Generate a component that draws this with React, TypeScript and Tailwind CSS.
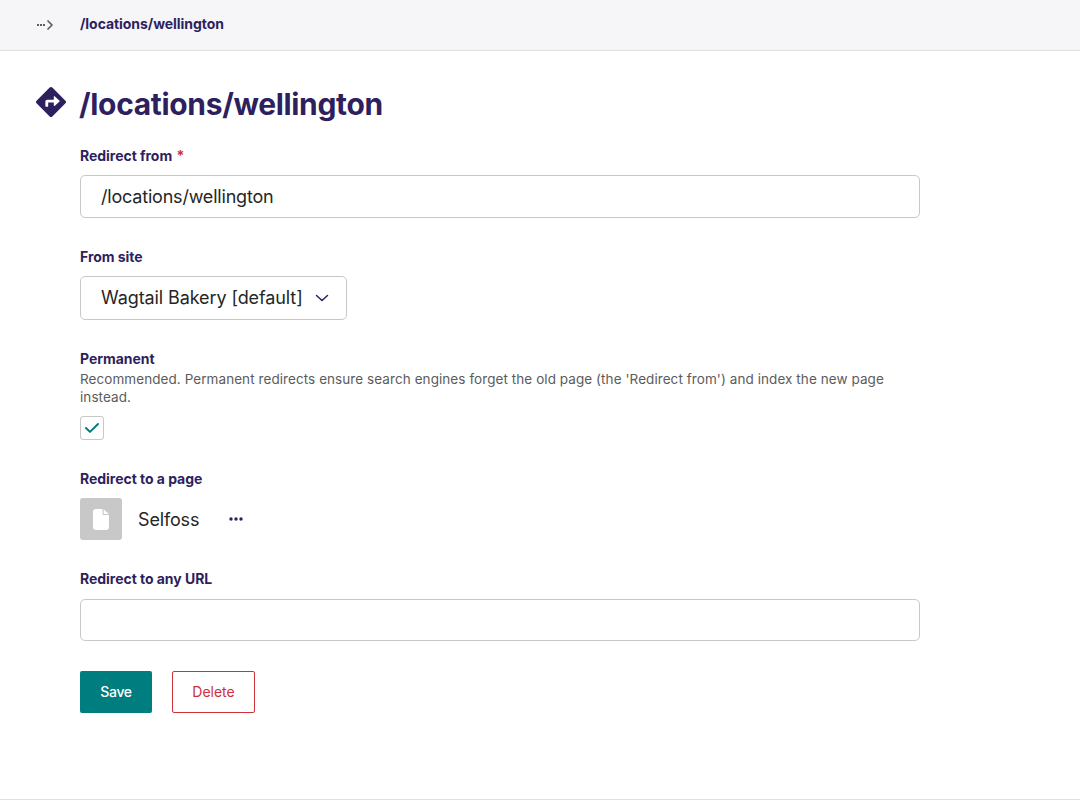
import type { ReactNode } from 'react';
import { FaDirections } from 'react-icons/fa';

function Label({ children, className = '' }: { children: ReactNode; className?: string }) {
  return <div className={`text-[14px] leading-[18px] font-bold tracking-[-0.04px] text-[#2e1f5e] ${className}`}>{children}</div>;
}

export default function App() {
  return (
    <div className="flex h-[800px] w-[1080px] flex-col overflow-hidden border-b border-[#dfdfdf] bg-white font-['Inter','Liberation_Sans',sans-serif] text-[#262626]">
      <header className="flex h-[51px] shrink-0 items-center border-b border-[#e0e0e0] bg-[#f6f6f8] pl-9">
        <svg className="mr-[26px] h-[12px] w-[18px]" viewBox="0 0 18 12" fill="none">
          <path d="M1 5h2v2H1zM4 5h2v2H4zM7 5h2v2H7z" fill="#5c5c5c" />
          <path d="M12 2l4 4-4 4" stroke="#5c5c5c" strokeWidth="1.7" strokeLinecap="round" strokeLinejoin="round" />
        </svg>
        <span className="-mt-[2px] text-[14px] leading-[18px] font-bold tracking-[-0.06px] text-[#2e1f5e]">/locations/wellington</span>
      </header>
      <main className="flex flex-col pl-9">
        <div className="mt-[34px] flex h-[36px] items-center">
          <FaDirections className="mr-[13px] -mt-[2px] h-[30px] w-[30px] text-[#2e1f5e]" />
          <h1 className="mt-px text-[30px] leading-[36px] font-bold tracking-[-0.34px] text-[#2e1f5e]">/locations/wellington</h1>
        </div>
        <form className="ml-11 flex w-[840px] flex-col" onSubmit={(e) => e.preventDefault()}>
          <Label className="mt-[26px]">
            Redirect from <span className="ml-px text-[#cd3238]">*</span>
          </Label>
          <input className="mt-[10px] h-[43px] rounded-[5px] border border-[#c8c8c8] px-5 text-[18px] tracking-[-0.2px] outline-none" defaultValue="/locations/wellington" />
          <Label className="mt-[30px]">From site</Label>
          <div className="mt-[10px] flex h-[44px] w-[267px] items-center rounded-[5px] border border-[#c8c8c8] pl-5">
            <span className="-mt-px w-[201px] text-[18px] tracking-[-0.1px] whitespace-nowrap">Wagtail Bakery [default]</span>
            <svg className="ml-[13px] h-[8px] w-[14px]" viewBox="0 0 14 8" fill="none">
              <path d="M1.500 1.500L7 6.500l5.500-5" stroke="#2e1f5e" strokeWidth="1.5" strokeLinecap="round" strokeLinejoin="round" />
            </svg>
          </div>
          <Label className="mt-[30px]">Permanent</Label>
          <p className="mt-[2px] text-[13.5px] leading-[18px] tracking-[0.07px] text-[#5c5c5c]">
            Recommended. Permanent redirects ensure search engines forget the old page (the 'Redirect from') and index the new page
            <br />
            instead.
          </p>
          <div className="mt-[10px] flex h-[24px] w-[24px] items-center justify-center rounded-[3px] border border-[#c8c8c8]">
            <svg className="h-[12px] w-[16px]" viewBox="0 0 16 12" fill="none">
              <path d="M2 6l4 3.900L14 2" stroke="#007d7e" strokeWidth="2" strokeLinecap="round" strokeLinejoin="round" />
            </svg>
          </div>
          <Label className="mt-[30px]">Redirect to a page</Label>
          <div className="mt-[10px] flex h-[42px] items-center">
            <div className="flex h-[42px] w-[42px] items-center justify-center rounded-[3px] bg-[#c8c8c8]">
              <svg className="h-[21px] w-[16px]" viewBox="0 0 16 21" fill="#fff">
                <path d="M3 0H9.500V4.800a1.200 1.200 0 0 0 1.200 1.200H16V18a3 3 0 0 1-3 3H3a3 3 0 0 1-3-3V3a3 3 0 0 1 3-3Z" />
                <path d="M10.700 0.200L15.800 5.100H10.700Z" />
              </svg>
            </div>
            <span className="ml-4 w-[91px] text-[18px] tracking-[-0.15px]">Selfoss</span>
            <svg className="h-[4px] w-[14px]" viewBox="0 0 14 4" fill="#2e1f5e">
              <circle cx="2" cy="2" r="1.700" />
              <circle cx="7" cy="2" r="1.700" />
              <circle cx="12" cy="2" r="1.700" />
            </svg>
          </div>
          <Label className="mt-[30px]">Redirect to any URL</Label>
          <input className="mt-[11px] h-[42px] rounded-[5px] border border-[#c8c8c8] px-5 text-[18px] outline-none" />
          <div className="mt-[30px] flex gap-5">
            <button className="h-[42px] w-[72px] rounded-[2px] bg-[#007d7e] pb-[2px] text-[14px] font-medium tracking-[-0.3px] text-white">Save</button>
            <button className="h-[42px] w-[83px] rounded-[2px] border border-[#cd3238] pb-[2px] text-[14px] text-[#cd3238]">Delete</button>
          </div>
        </form>
      </main>
    </div>
  );
}
